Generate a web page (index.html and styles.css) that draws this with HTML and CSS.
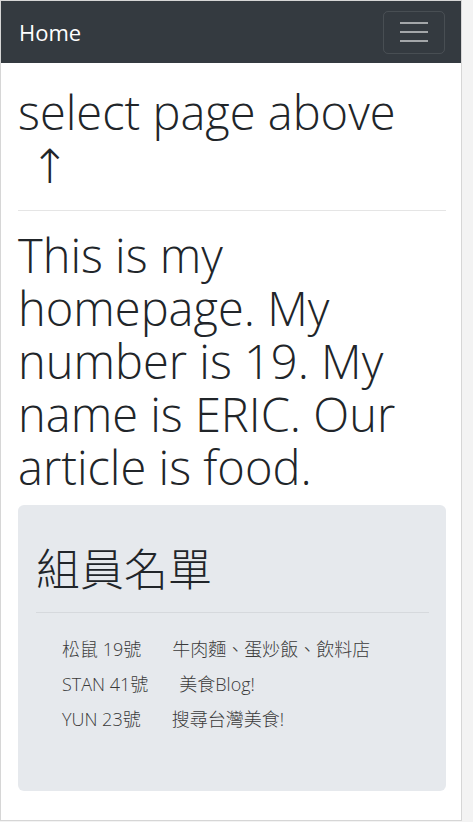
FILE: index.html
```html
<!DOCTYPE html>
<html lang="zh-Hant">
<head>
<meta charset="utf-8">
<title>Home</title>
<link rel="stylesheet" href="styles.css">
</head>
<body>
<div class="frame">
  <nav class="navbar">
    <a class="brand" href="#">Home</a>
    <button class="toggler" type="button" aria-label="Toggle navigation">
      <svg width="28" height="22" viewBox="0 0 28 22" aria-hidden="true">
        <path d="M0 2h28M0 11h28M0 20h28" stroke="rgba(255,255,255,0.55)" stroke-width="2.2" fill="none"/>
      </svg>
    </button>
  </nav>
  <main class="container">
    <h1 class="display">select page above<br><span class="arrow">↑</span></h1>
    <hr class="rule">
    <h1 class="display intro">This is my homepage. My number is 19. My name is ERIC. Our article is food.</h1>
    <section class="jumbotron">
      <h2 class="jumbo-title">組員名單</h2>
      <hr class="rule rule-dark">
      <ul class="members">
        <li><span class="who">松鼠 19號</span><span class="what">牛肉麵、蛋炒飯、飲料店</span></li>
        <li><span class="who">STAN 41號</span><span class="what">美食Blog!</span></li>
        <li><span class="who">YUN 23號</span><span class="what">搜尋台灣美食!</span></li>
      </ul>
    </section>
  </main>
</div>
</body>
</html>
```
FILE: styles.css
```css
html {
  background: #f3f3f3;
}
body {
  margin: 0;
  font-family: "Open Sans", "Noto Sans", "Noto Sans CJK TC", sans-serif;
  color: #212529;
}
.frame {
  width: 460px;
  height: 819px;
  border: 1px solid #d6d6d6;
  background: #fff;
  overflow: hidden;
}
.navbar {
  height: 62px;
  background: #343a40;
  display: flex;
  align-items: center;
  justify-content: space-between;
  padding: 0 16px 0 18px;
}
.brand {
  color: #fff;
  text-decoration: none;
  font-size: 22px;
  line-height: 1;
}
.toggler {
  width: 62px;
  height: 43px;
  border: 1px solid rgba(255, 255, 255, 0.1);
  border-radius: 5px;
  background: transparent;
  display: flex;
  align-items: center;
  justify-content: center;
  padding: 0;
}
.container {
  padding: 0 15px 0 17px;
}
.display {
  margin: 23px 0 0;
  font-size: 47px;
  line-height: 53px;
  font-weight: 300;
}
.arrow {
  display: inline-block;
  padding-left: 12px;
  font-family: "DejaVu Sans", sans-serif;
  font-weight: 200;
}
.rule {
  border: 0;
  border-top: 1px solid #e5e5e5;
  margin: 17px 0 0;
}
.intro {
  margin-top: 18px;
}
.jumbotron {
  margin-top: 11px;
  background: #e6e9ed;
  border-radius: 6px;
  padding: 36px 17px 37px 18px;
  height: 286px;
  box-sizing: border-box;
}
.jumbo-title {
  margin: 0;
  font-family: "Noto Sans CJK TC", sans-serif;
  font-size: 44px;
  line-height: 53px;
  font-weight: 300;
}
.rule-dark {
  border-top-color: #d6d9dd;
  margin-top: 18px;
}
.members {
  list-style: none;
  margin: 19px 0 0;
  padding: 0 0 0 26px;
  font-family: "Open Sans", "Noto Sans CJK TC", sans-serif;
  font-size: 18px;
  line-height: 35px;
  color: #3a3a3a;
  font-weight: 300;
}
.members li {
  display: flex;
}
.what {
  margin-left: 31px;
}
```
